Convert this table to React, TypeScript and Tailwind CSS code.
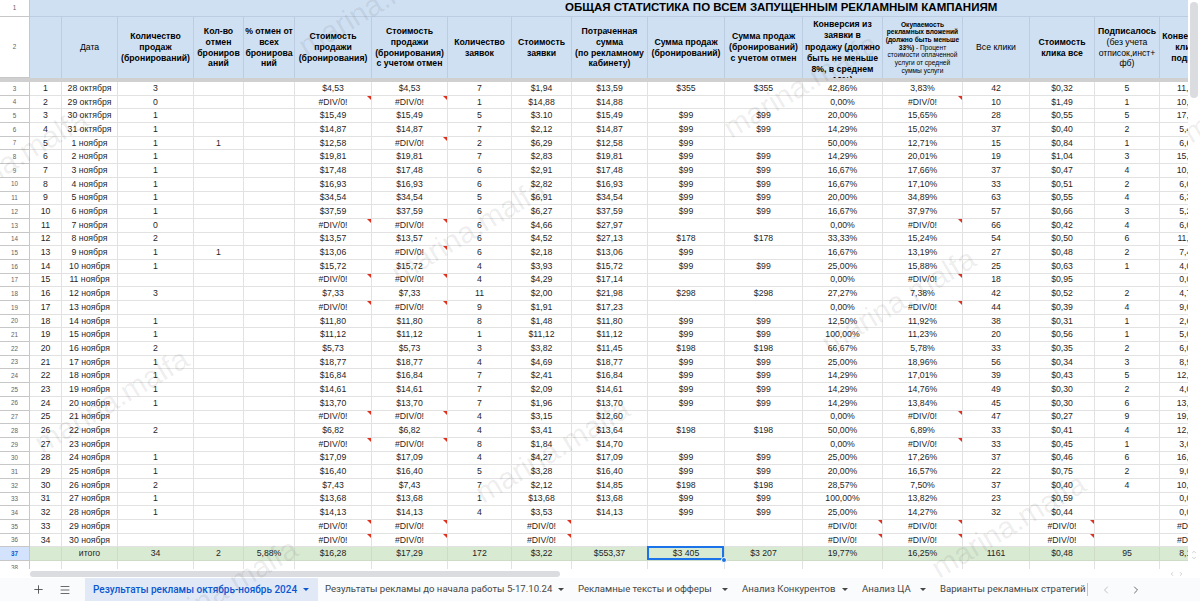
import React from 'react';
import { Plus, Menu, ChevronLeft, ChevronRight, ChevronUp, ChevronDown } from 'lucide-react';

const COLS = [
  'w-[32px]', 'w-[56px]', 'w-[76px]', 'w-[50px]', 'w-[51px]', 'w-[77px]', 'w-[76px]', 'w-[64px]', 'w-[60px]',
  'w-[76px]', 'w-[77px]', 'w-[78px]', 'w-[80px]', 'w-[80px]', 'w-[67px]', 'w-[65px]', 'w-[65px]', 'w-[64px]',
];

const data: string[][] = [
  ['1','28 октября','3','','','$4,53','$4,53','7','$1,94','$13,59','$355','$355','42,86%','3,83%','42','$0,32','5','11,90%'],
  ['2','29 октября','0','','','#DIV/0!','#DIV/0!','1','$14,88','$14,88','','','0,00%','#DIV/0!','10','$1,49','1','10,00%'],
  ['3','30 октября','1','','','$15,49','$15,49','5','$3.10','$15,49','$99','$99','20,00%','15,65%','28','$0,55','5','17,86%'],
  ['4','31 октября','1','','','$14,87','$14,87','7','$2,12','$14,87','$99','$99','14,29%','15,02%','37','$0,40','2','5,41%'],
  ['5','1 ноября','1','1','','$12,58','#DIV/0!','2','$6,29','$12,58','$99','','50,00%','12,71%','15','$0,84','1','6,67%'],
  ['6','2 ноября','1','','','$19,81','$19,81','7','$2,83','$19,81','$99','$99','14,29%','20,01%','19','$1,04','3','15,79%'],
  ['7','3 ноября','1','','','$17,48','$17,48','6','$2,91','$17,48','$99','$99','16,67%','17,66%','37','$0,47','4','10,81%'],
  ['8','4 ноября','1','','','$16,93','$16,93','6','$2,82','$16,93','$99','$99','16,67%','17,10%','33','$0,51','2','6,06%'],
  ['9','5 ноября','1','','','$34,54','$34,54','5','$6,91','$34,54','$99','$99','20,00%','34,89%','63','$0,55','4','6,35%'],
  ['10','6 ноября','1','','','$37,59','$37,59','6','$6,27','$37,59','$99','$99','16,67%','37,97%','57','$0,66','3','5,26%'],
  ['11','7 ноября','0','','','#DIV/0!','#DIV/0!','6','$4,66','$27,97','','','0,00%','#DIV/0!','66','$0,42','4','6,06%'],
  ['12','8 ноября','2','','','$13,57','$13,57','6','$4,52','$27,13','$178','$178','33,33%','15,24%','54','$0,50','6','11,11%'],
  ['13','9 ноября','1','1','','$13,06','#DIV/0!','6','$2,18','$13,06','$99','','16,67%','13,19%','27','$0,48','2','7,41%'],
  ['14','10 ноября','1','','','$15,72','$15,72','4','$3,93','$15,72','$99','$99','25,00%','15,88%','25','$0,63','1','4,00%'],
  ['15','11 ноября','','','','#DIV/0!','#DIV/0!','4','$4,29','$17,14','','','0,00%','#DIV/0!','18','$0,95','','0,00%'],
  ['16','12 ноября','3','','','$7,33','$7,33','11','$2,00','$21,98','$298','$298','27,27%','7,38%','42','$0,52','2','4,76%'],
  ['17','13 ноября','','','','#DIV/0!','#DIV/0!','9','$1,91','$17,23','','','0,00%','#DIV/0!','44','$0,39','4','9,09%'],
  ['18','14 ноября','1','','','$11,80','$11,80','8','$1,48','$11,80','$99','$99','12,50%','11,92%','38','$0,31','1','2,63%'],
  ['19','15 ноября','1','','','$11,12','$11,12','1','$11,12','$11,12','$99','$99','100,00%','11,23%','20','$0,56','1','5,00%'],
  ['20','16 ноября','2','','','$5,73','$5,73','3','$3,82','$11,45','$198','$198','66,67%','5,78%','33','$0,35','2','6,06%'],
  ['21','17 ноября','1','','','$18,77','$18,77','4','$4,69','$18,77','$99','$99','25,00%','18,96%','56','$0,34','3','8,93%'],
  ['22','18 ноября','1','','','$16,84','$16,84','7','$2,41','$16,84','$99','$99','14,29%','17,01%','39','$0,43','5','12,82%'],
  ['23','19 ноября','1','','','$14,61','$14,61','7','$2,09','$14,61','$99','$99','14,29%','14,76%','49','$0,30','2','4,08%'],
  ['24','20 ноября','1','','','$13,70','$13,70','7','$1,96','$13,70','$99','$99','14,29%','13,84%','45','$0,30','6','13,33%'],
  ['25','21 ноября','','','','#DIV/0!','#DIV/0!','4','$3,15','$12,60','','','0,00%','#DIV/0!','47','$0,27','9','19,15%'],
  ['26','22 ноября','2','','','$6,82','$6,82','4','$3,41','$13,64','$198','$198','50,00%','6,89%','33','$0,41','4','12,12%'],
  ['27','23 ноября','','','','#DIV/0!','#DIV/0!','8','$1,84','$14,70','','','0,00%','#DIV/0!','33','$0,45','1','3,03%'],
  ['28','24 ноября','1','','','$17,09','$17,09','4','$4,27','$17,09','$99','$99','25,00%','17,26%','37','$0,46','6','16,22%'],
  ['29','25 ноября','1','','','$16,40','$16,40','5','$3,28','$16,40','$99','$99','20,00%','16,57%','22','$0,75','2','9,09%'],
  ['30','26 ноября','2','','','$7,43','$7,43','7','$2,12','$14,85','$198','$198','28,57%','7,50%','37','$0,40','4','10,81%'],
  ['31','27 ноября','1','','','$13,68','$13,68','1','$13,68','$13,68','$99','$99','100,00%','13,82%','23','$0,59','','0,00%'],
  ['32','28 ноября','1','','','$14,13','$14,13','4','$3,53','$14,13','$99','$99','25,00%','14,27%','32','$0,44','','0,00%'],
  ['33','29 ноября','','','','#DIV/0!','#DIV/0!','','#DIV/0!','','','','#DIV/0!','#DIV/0!','','#DIV/0!','','#DIV/0!'],
  ['34','30 ноября','','','','#DIV/0!','#DIV/0!','','#DIV/0!','','','','#DIV/0!','#DIV/0!','','#DIV/0!','','#DIV/0!'],
];

const total = ['', 'итого', '34', '2', '5,88%', '$16,28', '$17,29', '172', '$3,22', '$553,37', '$3 405', '$3 207', '19,77%', '16,25%', '1161', '$0,48', '95', '8,18%'];

const headers: React.ReactNode[] = [
  null,
  <span className="font-normal">Дата</span>,
  <>Количество<br />продаж<br />(бронирований)</>,
  <>Кол-во<br />отмен<br />брониров<br />аний</>,
  <>% отмен от<br />всех<br />бронирова<br />ний</>,
  <>Стоимость<br />продажи<br />(бронирования)</>,
  <>Стоимость<br />продажи<br />(бронирования)<br />с учетом отмен</>,
  <>Количество<br />заявок</>,
  <>Стоимость<br />заявки</>,
  <>Потраченная<br />сумма<br />(по рекламному<br />кабинету)</>,
  <>Сумма продаж<br />(бронирований)</>,
  <>Сумма продаж<br />(бронирований)<br />с учетом отмен</>,
  <>Конверсия из<br />заявки в<br />продажу (должно<br />быть не меньше<br />8%, в среднем<br />10%)</>,
  <>Окупаемость<br />рекламных вложений<br />(должно быть меньше<br />33%)<span className="font-normal"> - Процент<br />стоимости оплаченной<br />услуги от средней<br />суммы услуги</span></>,
  <span className="font-normal">Все клики</span>,
  <>Стоимость<br />клика все</>,
  <>Подписалось<br /><span className="font-normal">(без учета<br />отписок,инст+<br />фб)</span></>,
  <>Конверсия из<br />клика в<br />подписку</>,
];

function Tri() {
  return (
    <span className="absolute top-0 right-0 w-0 h-0 border-t-[4px] border-l-[4px] border-t-[#e0301e] border-l-transparent" />
  );
}

function RowHead({ n, active }: { n: string; active?: boolean }) {
  return (
    <div
      className={`w-[30px] shrink-0 flex items-center justify-center border-r border-b border-[#c7c7c7] text-[6.3px] ${
        active ? 'bg-[#d3e3fd] text-[#0b57d0] font-bold' : 'bg-white text-[#5f6368]'
      }`}
    >
      {n}
    </div>
  );
}

function DataRow({ cells, n }: { cells: string[]; n: string }) {
  return (
    <div className="flex h-[13.7px] text-[8.7px] text-[#1f1f1f]">
      <RowHead n={n} />
      {cells.map((v, i) => (
        <div
          key={i}
          className={`${COLS[i]} shrink-0 relative flex items-center justify-center border-r border-b border-[#e2e2e2] whitespace-nowrap`}
        >
          {v}
          {v === '#DIV/0!' && <Tri />}
        </div>
      ))}
    </div>
  );
}

function TotalRow() {
  return (
    <div className="flex h-[13.7px] text-[8.7px] text-[#1f1f1f]">
      <RowHead n="37" active />
      {total.map((v, i) => (
        <div
          key={i}
          className={`${COLS[i]} shrink-0 relative flex items-center justify-center border-r border-b border-[#cddbc7] bg-[#d9ead3] whitespace-nowrap ${
            i === 10 ? 'z-10' : ''
          }`}
        >
          {v}
          {i === 10 && (
            <>
              <span className="absolute -left-[1px] -top-[1px] right-0 bottom-0 border-2 border-[#1a73e8]" />
              <span className="absolute -right-[3px] -bottom-[3px] w-[6px] h-[6px] rounded-full bg-[#1a73e8] border border-white" />
            </>
          )}
        </div>
      ))}
    </div>
  );
}

function Caret({ blue }: { blue?: boolean }) {
  return (
    <span
      className={`shrink-0 w-0 h-0 border-l-[3px] border-r-[3px] border-t-[3.5px] border-l-transparent border-r-transparent ${
        blue ? 'border-t-[#0b57d0]' : 'border-t-[#444746]'
      }`}
    />
  );
}

function Tab({ label, w }: { label: string; w: string }) {
  return (
    <div className={`${w} shrink-0 flex items-center justify-between px-[7px] text-[#444746] text-[9.6px] whitespace-nowrap`}>
      <span>{label}</span>
      <Caret />
    </div>
  );
}

const marks = [
  'left-[381px] top-[213px]',
  'left-[24px] top-[383px]',
  'left-[811px] top-[283px]',
  'left-[465px] top-[433px]',
  'left-[133px] top-[573px]',
  'left-[921px] top-[508px]',
  'left-[713px] top-[68px]',
  'left-[288px] top-[-14px]',
  'left-[-77px] top-[143px]',
  'left-[1173px] top-[73px]',
];

export default function App() {
  return (
    <div className="w-[1200px] h-[601px] overflow-hidden relative bg-white font-['Liberation_Sans',Arial,sans-serif]">
      <div className="flex h-[569px]">
        <div className="w-[1188px] h-full overflow-hidden">
          {/* Row 1 */}
          <div className="flex h-[17px]">
            <RowHead n="1" />
            <div className="w-[1223px] shrink-0 bg-[#cfe0f3] flex items-center pl-[535px] text-[11.5px] font-bold text-black whitespace-nowrap border-b border-[#bccde2]">
              ОБЩАЯ СТАТИСТИКА ПО ВСЕМ ЗАПУЩЕННЫМ РЕКЛАМНЫМ КАМПАНИЯМ
            </div>
          </div>
          {/* Row 2 */}
          <div className="flex h-[61px]">
            <RowHead n="2" />
            {headers.map((h, i) => (
              <div
                key={i}
                className={`${COLS[i]} shrink-0 h-full overflow-hidden bg-[#cfe0f3] border-r border-[#bccde2] flex justify-center text-center font-bold text-black whitespace-nowrap ${
                  i === 12
                    ? 'items-start pt-[2px] text-[8.7px] leading-[11.3px]'
                    : i === 13
                    ? 'items-center text-[6.6px] leading-[7.7px]'
                    : 'items-center text-[8.7px] leading-[10.7px]'
                }`}
              >
                <div>{h}</div>
              </div>
            ))}
          </div>
          {/* frozen divider */}
          <div className="h-[4px] w-[1253px] bg-[#d0d0d0]" />
          {data.map((r, i) => (
            <DataRow key={i} cells={r} n={String(i + 3)} />
          ))}
          <TotalRow />
          <DataRow cells={Array(18).fill('')} n="38" />
        </div>
        {/* vertical scrollbar */}
        <div className="w-[12px] h-full bg-white flex flex-col items-center">
          <div className="mt-[2px] w-[8px] h-[96px] rounded-full bg-[#dadce0]" />
          <div className="flex-1" />
          <div className="flex flex-col items-center mb-[8px] text-[#9aa0a6]">
            <ChevronUp size={6} strokeWidth={2} />
            <ChevronDown size={6} strokeWidth={2} />
          </div>
        </div>
      </div>
      {/* horizontal scrollbar */}
      <div className="h-[9px] flex items-center">
        <div className="ml-[30px] w-[530px] h-[6px] rounded-full bg-[#dadce0]" />
        <div className="ml-auto mr-[16px] flex items-center gap-[3px] text-[#9aa0a6]">
          <ChevronLeft size={6} strokeWidth={2} />
          <ChevronRight size={6} strokeWidth={2} />
        </div>
      </div>
      {/* tabs */}
      <div className="h-[23px] flex items-stretch bg-[#f9fbfd] text-[10px] font-['Roboto',Arial,sans-serif]">
        <div className="w-[85px] shrink-0 flex items-center text-[#444746]">
          <Plus size={13} strokeWidth={1.6} className="ml-[32px]" />
          <Menu size={12} strokeWidth={1.6} className="ml-[14px]" />
        </div>
        <div className="w-[233px] shrink-0 flex items-center justify-between pl-[8px] pr-[9px] bg-[#e1e9f7] text-[#0b57d0] font-medium whitespace-nowrap">
          <span>Результаты рекламы октябрь-ноябрь 2024</span>
          <Caret blue />
        </div>
        <Tab label="Результаты рекламы до начала работы 5-17.10.24" w="w-[253px]" />
        <Tab label="Рекламные тексты и офферы" w="w-[164px]" />
        <Tab label="Анализ Конкурентов" w="w-[120px]" />
        <Tab label="Анализ ЦА" w="w-[78px]" />
        <div className="w-[155px] shrink-0 overflow-hidden flex items-center pl-[7px] text-[#444746] text-[9.6px] whitespace-nowrap border-r border-[#c4c7c5] my-[5px]">
          Варианты рекламных стратегий
        </div>
        <div className="flex items-center ml-[12px] gap-[18px]">
          <ChevronLeft size={12} strokeWidth={1.6} className="text-[#b0b3b8]" />
          <ChevronRight size={12} strokeWidth={1.6} className="text-[#444746]" />
        </div>
      </div>
      {/* watermark */}
      <div className="absolute inset-0 pointer-events-none overflow-hidden">
        {marks.map((m, i) => (
          <div
            key={i}
            className={`absolute ${m} w-[174px] h-[34px] flex items-center justify-center -rotate-[31deg] text-[30px] text-black/[0.08] whitespace-nowrap font-['Liberation_Sans',Arial,sans-serif]`}
          >
            marina.malfa
          </div>
        ))}
      </div>
    </div>
  );
}
